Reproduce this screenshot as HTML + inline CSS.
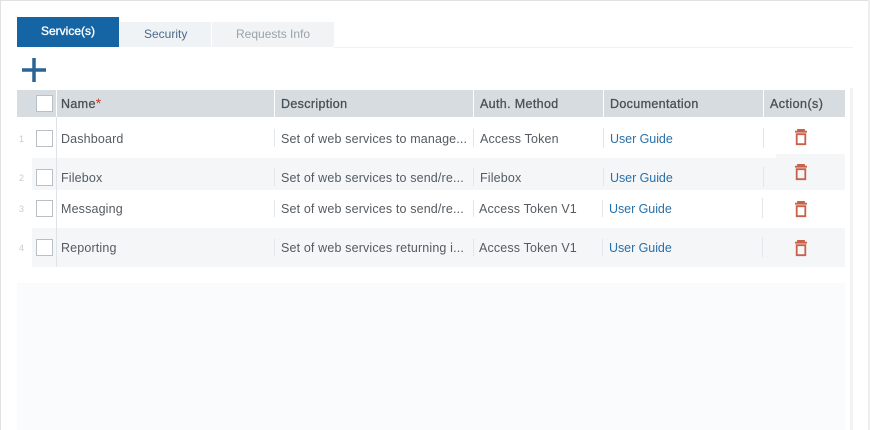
<!DOCTYPE html>
<html><head><meta charset="utf-8"><style>
html,body{margin:0;padding:0;background:#fff}
#p{position:relative;width:870px;height:430px;overflow:hidden;background:#fff;font-family:"Liberation Sans",sans-serif;font-size:12.5px;color:#555b60}
#p div,#p svg{position:absolute}
.t{white-space:nowrap;line-height:16px;letter-spacing:.15px}
.h{font-weight:normal;color:#4a5055;-webkit-text-stroke:.3px #4a5055;letter-spacing:.35px}
.l{color:#2a70a8;letter-spacing:-.05px}
.n{font-size:9px;color:#c8cccf;line-height:10px}
.c{width:15px;height:15px;border:1px solid #b8c0c6;background:#fff}
.s{width:1px;background:#e3e6e8}
.w{width:1px;background:#fff}
</style></head><body><div id="p">
<div style="left:0;top:0;width:870px;height:1px;background:#dfe1e2"></div>
<div style="left:0;top:0;width:1px;height:430px;background:#dfe1e2"></div>
<div style="left:868px;top:0;width:2px;height:430px;background:#eeeeee"></div>
<div style="left:850px;top:88px;width:3px;height:342px;background:#f1f2f3"></div>
<div style="left:334px;top:47px;width:519px;height:1px;background:#eff1f2"></div>

<div style="left:17px;top:17px;width:102px;height:30px;background:#1565a5"></div>
<div class="t" style="left:41px;top:23px;color:#fff;font-size:12px;-webkit-text-stroke:.35px #fff;letter-spacing:0">Service(s)</div>
<div style="left:119px;top:22px;width:92px;height:25px;background:#eff3f6"></div>
<div class="t" style="left:144px;top:26px;color:#4a6a8a;letter-spacing:0;font-size:12px">Security</div>
<div style="left:212px;top:22px;width:122px;height:25px;background:#f1f3f5"></div>
<div class="t" style="left:236px;top:26px;color:#9aa3a9;letter-spacing:0;font-size:12px">Requests Info</div>

<svg style="left:20px;top:56px" width="28" height="28" viewBox="0 0 28 28"><path d="M2 14H26M14 2V26" stroke="#2a6496" stroke-width="3.500" fill="none"/></svg>

<div style="left:17px;top:90px;width:828px;height:27px;background:#d6dce0"></div>
<div class="w" style="left:56px;top:90px;height:27px"></div>
<div class="w" style="left:274px;top:90px;height:27px"></div>
<div class="w" style="left:473px;top:90px;height:27px"></div>
<div class="w" style="left:603px;top:90px;height:27px"></div>
<div class="w" style="left:763px;top:90px;height:27px"></div>
<div class="c" style="left:36px;top:95px"></div>
<div class="t h" style="left:61px;top:96px">Name<span style="color:#c0392b;-webkit-text-stroke:0;font-size:14px;line-height:0">*</span></div>
<div class="t h" style="left:281px;top:96px">Description</div>
<div class="t h" style="left:480px;top:96px">Auth. Method</div>
<div class="t h" style="left:610px;top:96px">Documentation</div>
<div class="t h" style="left:770px;top:96px;letter-spacing:.45px">Action(s)</div>

<div style="left:32px;top:158px;width:813px;height:32px;background:#f5f6f8"></div>
<div style="left:776px;top:154px;width:69px;height:36px;background:#f5f6f8"></div>
<div style="left:32px;top:228px;width:813px;height:39px;background:#f5f6f8"></div>
<div style="left:17px;top:283px;width:828px;height:147px;background:#fafbfc"></div>
<div style="left:56px;top:117px;width:1px;height:150px;background:#dde3e7"></div>

<div class="n" style="left:19px;top:134px">1</div>
<div class="c" style="left:36px;top:130px"></div>
<div class="t" style="left:61px;top:131px">Dashboard</div>
<div class="s" style="left:274px;top:129px;height:18px"></div>
<div class="t" style="left:281px;top:131px">Set of web services to manage...</div>
<div class="s" style="left:473px;top:129px;height:18px"></div>
<div class="t" style="left:480px;top:131px">Access Token</div>
<div class="s" style="left:603px;top:128px;height:20px"></div>
<div class="t l" style="left:610px;top:131px">User Guide</div>
<div class="s" style="left:763px;top:128px;height:20px"></div>

<div class="n" style="left:19px;top:173px">2</div>
<div class="c" style="left:36px;top:169px"></div>
<div class="t" style="left:61px;top:170px">Filebox</div>
<div class="s" style="left:274px;top:168px;height:18px"></div>
<div class="t" style="left:281px;top:170px">Set of web services to send/re...</div>
<div class="s" style="left:473px;top:168px;height:18px"></div>
<div class="t" style="left:480px;top:170px">Filebox</div>
<div class="s" style="left:603px;top:168px;height:18px"></div>
<div class="t l" style="left:610px;top:170px">User Guide</div>
<div class="s" style="left:763px;top:167px;height:20px"></div>

<div class="n" style="left:19px;top:204px">3</div>
<div class="c" style="left:36px;top:200px"></div>
<div class="t" style="left:61px;top:201px">Messaging</div>
<div class="s" style="left:274px;top:200px;height:17px"></div>
<div class="t" style="left:281px;top:201px">Set of web services to send/re...</div>
<div class="s" style="left:473px;top:200px;height:17px"></div>
<div class="t" style="left:479px;top:201px">Access Token V1</div>
<div class="s" style="left:602px;top:200px;height:17px"></div>
<div class="t l" style="left:609px;top:201px">User Guide</div>
<div class="s" style="left:762px;top:198px;height:20px"></div>

<div class="n" style="left:19px;top:243px">4</div>
<div class="c" style="left:36px;top:239px"></div>
<div class="t" style="left:61px;top:240px">Reporting</div>
<div class="s" style="left:274px;top:239px;height:17px"></div>
<div class="t" style="left:281px;top:240px">Set of web services returning i...</div>
<div class="s" style="left:473px;top:239px;height:17px"></div>
<div class="t" style="left:479px;top:240px">Access Token V1</div>
<div class="s" style="left:602px;top:239px;height:17px"></div>
<div class="t l" style="left:609px;top:240px">User Guide</div>
<div class="s" style="left:762px;top:237px;height:20px"></div>

<svg style="left:794px;top:129px" width="14" height="17" viewBox="0 0 14 17"><path d="M1 2.700H13M4 2.700V.9H10V2.700M2.700 5.200H11.300V15.200H2.700Z" stroke="#c8604a" stroke-width="1.800" fill="none"/></svg>
<svg style="left:794px;top:164px" width="14" height="17" viewBox="0 0 14 17"><path d="M1 2.700H13M4 2.700V.9H10V2.700M2.700 5.200H11.300V15.200H2.700Z" stroke="#c8604a" stroke-width="1.800" fill="none"/></svg>
<svg style="left:794px;top:201px" width="14" height="17" viewBox="0 0 14 17"><path d="M1 2.700H13M4 2.700V.9H10V2.700M2.700 5.200H11.300V15.200H2.700Z" stroke="#c8604a" stroke-width="1.800" fill="none"/></svg>
<svg style="left:794px;top:240px" width="14" height="17" viewBox="0 0 14 17"><path d="M1 2.700H13M4 2.700V.9H10V2.700M2.700 5.200H11.300V15.200H2.700Z" stroke="#c8604a" stroke-width="1.800" fill="none"/></svg>
</div></body></html>
